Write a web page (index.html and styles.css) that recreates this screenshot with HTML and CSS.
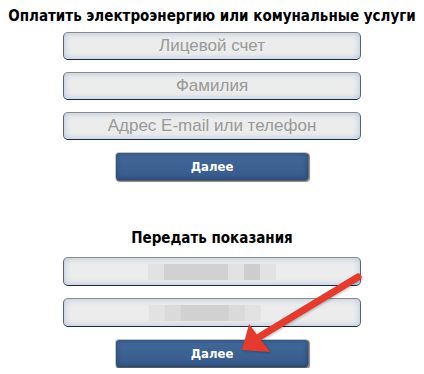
FILE: index.html
```html
<!DOCTYPE html>
<html>
<head>
    <title>Оплата услуг</title>
    <link rel="stylesheet" href="styles.css">
</head>
<body>

    <!-- Оплата -->
    <div class="form-container">
        <h2 class="form-title">Оплатить электроэнергию или комунальные услуги</h2>
        <form class="pay-form">
            <input type="text" class="field" placeholder="Лицевой счет" />
            <input type="text" class="field" placeholder="Фамилия" />
            <input type="text" class="field" placeholder="Адрес E-mail или телефон" />
            <input type="submit" class="btn" value="Далее" />
        </form>
    </div>

    <!-- Показания -->
    <div class="form-container second">
        <h2 class="form-title">Передать показания</h2>
        <form class="pay-form">
            <div class="field filled">
                <span class="blur">
                    <span class="b b-light w16"></span><span class="b b-mid w64"></span><span class="b b-light w16"></span><span class="b b-dark w16"></span><span class="b b-light w16"></span>
                </span>
            </div>
            <div class="field filled">
                <span class="blur two">
                    <span class="b b-light w16"></span><span class="b b-soft w16"></span><span class="b b-mid w48"></span><span class="b b-soft w16"></span><span class="b b-light w16"></span>
                </span>
            </div>
            <input type="submit" class="btn" value="Далее" />
        </form>

        <!-- стрелка поверх формы -->
        <svg class="arrow" width="130" height="90" viewBox="0 0 130 90">
            <line x1="121" y1="6" x2="22" y2="66" stroke="#e53a2e" stroke-width="7" stroke-linecap="round" />
            <polygon points="12,53 5,79 33,81" fill="#e53a2e" />
        </svg>
    </div>
</body>
</html>
```

FILE: styles.css
```css
/* Styling */
body {
    margin: 0;
    background-color: #fff;
    font-family: 'DejaVu Sans', sans-serif;
}
.form-container {
    display: flex;
    flex-direction: column;
    align-items: center;
    padding-top: 6px;
}
.form-container.second {
    position: relative;
    padding-top: 47px;
}
.form-title {
    margin: 0 0 6px 0;
    font-family: 'DejaVu Sans Condensed', 'DejaVu Sans', sans-serif;
    font-size: 15px;
    line-height: 20px;
    font-weight: bold;
    color: #000;
    white-space: nowrap;
}
.second .form-title {
    margin-bottom: 9px;
}
.pay-form {
    display: flex;
    flex-direction: column;
    align-items: center;
    gap: 12px;
    margin: 0;
}
.field {
    width: 298px;
    height: 28px;
    box-sizing: border-box;
    border: 1px solid;
    border-color: #8a8a8a #5a6478 #17264a #5a6478;
    border-radius: 5px;
    background-color: #ececec;
    box-shadow: inset 0 0 7px #b4c3db;
    font-family: 'Liberation Sans', Arial, sans-serif;
    font-size: 17px;
    text-align: center;
    padding: 0;
    margin: 0;
}
.field::placeholder {
    color: #999;
}
.field.filled {
    display: flex;
    justify-content: center;
    align-items: center;
    height: 29px;
}
.blur {
    display: flex;
    height: 16px;
}
.blur.two {
    margin-left: -14px;
}
.b {
    display: block;
    height: 16px;
}
.w16 { width: 16px; }
.w48 { width: 48px; }
.w64 { width: 64px; }
.b-light { background-color: #e2e2e2; }
.b-soft { background-color: #dadada; }
.b-mid { background-color: #d1d1d1; }
.b-dark { background-color: #cdcdcd; }
.btn {
    width: 194px;
    height: 29px;
    margin-top: 0;
    border: 1px solid;
    border-color: #c6c6c6 #6a6a6a #585858 #c6c6c6;
    border-radius: 4px;
    background: linear-gradient(#42699a, #365a8a);
    box-shadow: inset 0 0 5px rgba(10, 25, 50, 0.45), 1px 1px 1px #8a8a8a;
    color: #fff;
    font-family: 'DejaVu Sans Condensed', 'DejaVu Sans', sans-serif;
    font-size: 13px;
    font-weight: bold;
    cursor: pointer;
}
.arrow {
    position: absolute;
    left: 237px;
    top: 90px;
    filter: drop-shadow(1px 1px 1px rgba(0, 0, 0, 0.25));
}
```
